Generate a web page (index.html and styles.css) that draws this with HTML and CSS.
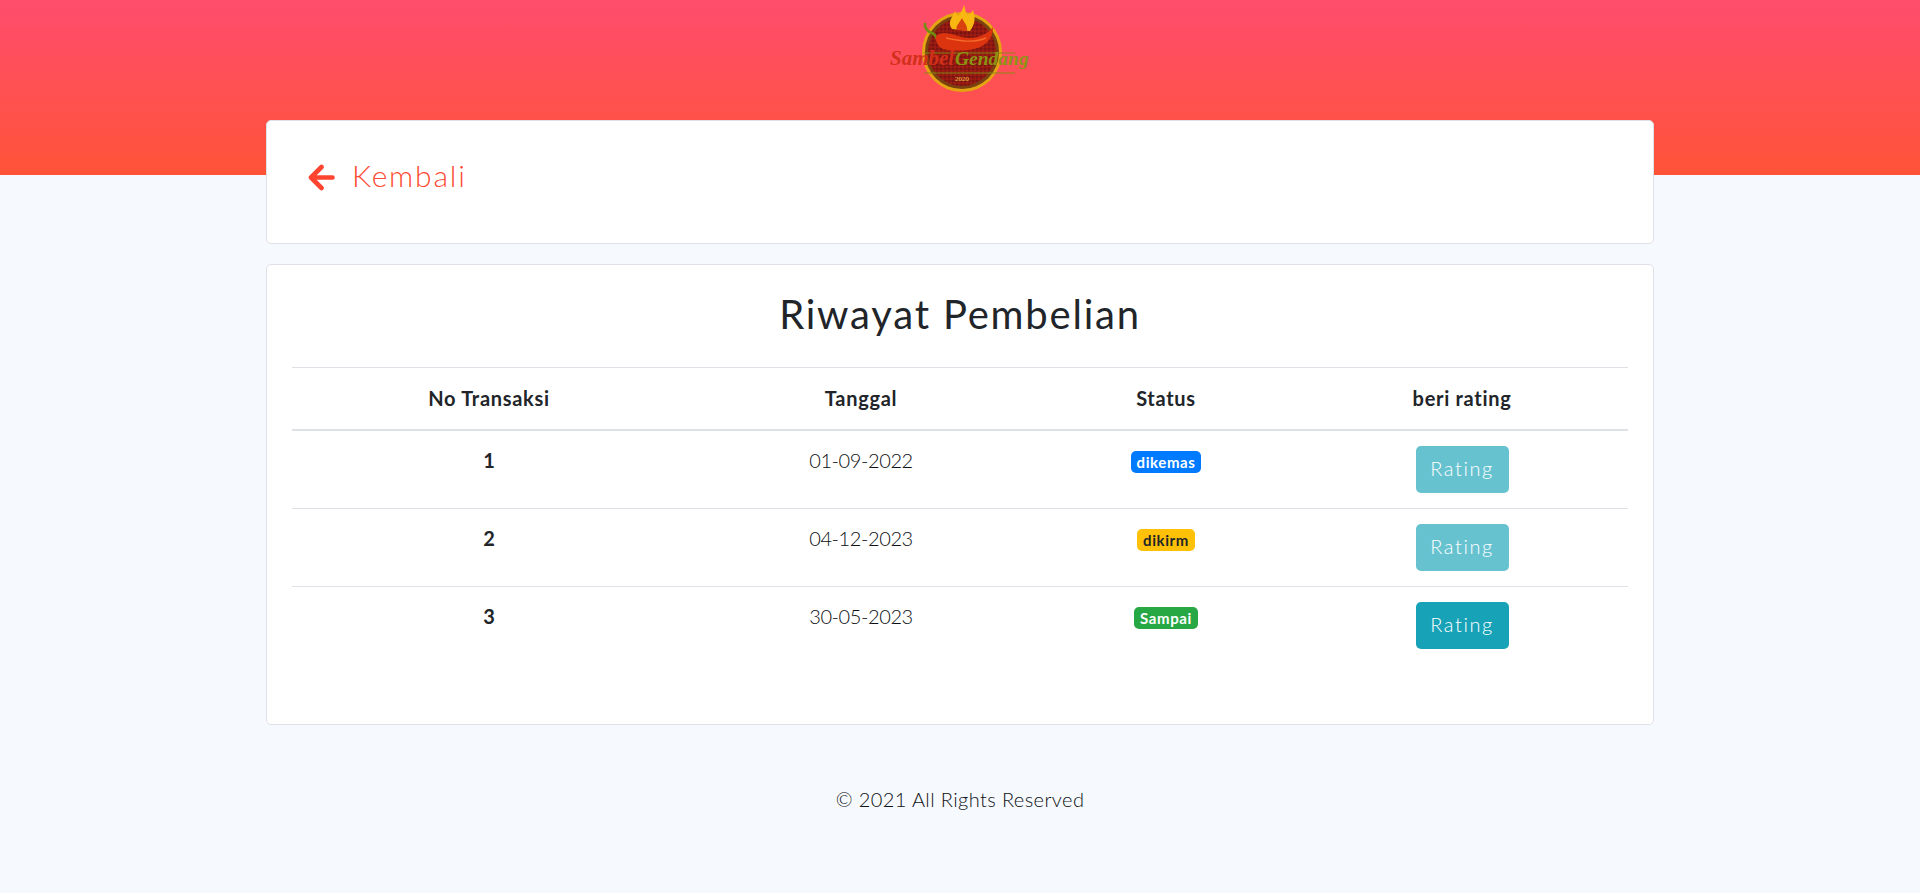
FILE: index.html
```html
<!DOCTYPE html>
<html lang="id">
<head>
<meta charset="utf-8">
<title>Riwayat Pembelian</title>
<link rel="stylesheet" href="styles.css">
</head>
<body>
<header class="hero">
  <svg class="logo" viewBox="0 0 160 96" width="160" height="96" role="img" aria-label="Sambel Gendang">
    <defs>
      <pattern id="speck" width="4" height="4" patternUnits="userSpaceOnUse">
        <rect width="4" height="4" fill="#8f1812"/>
        <circle cx="1" cy="1" r="0.8" fill="#5e0e0c"/>
        <circle cx="3" cy="3" r="0.7" fill="#b92414"/>
      </pattern>
    </defs>
    <circle cx="82" cy="52" r="40" fill="#e5a412"/>
    <circle cx="82" cy="52" r="37" fill="#7a4210"/>
    <circle cx="82" cy="52" r="34" fill="url(#speck)"/>
    <path d="M72 29C67 22 72 18 75 11C76 15 78 16 79 15C81 12 83 9 84 5C86 10 85 13 88 15C90 14 92 12 93 10C95 17 96 23 90 31Z" fill="#f9b712"/>
    <path d="M77 30C75 26 79 24 82 18C84 23 88 25 87 31Z" fill="#d9420f"/>
    <path d="M45 23C44 29 48 32 54 34L58 40" fill="none" stroke="#6f8e12" stroke-width="2.6"/>
    <path d="M56 36C62 30 72 34 82 37C94 40 106 36 113 27C113 38 107 46 94 49C84 51 71 51 63 49C58 47 55 41 56 36Z" fill="#dd3410"/>
    <path d="M66 38C76 40 92 44 106 38" fill="none" stroke="#f46a2a" stroke-width="1.4"/>
    <path d="M44 53H135M44 73H135" stroke="#8f8512" stroke-width="1"/>
    <text x="10" y="65" class="logo-red">Sambel</text>
    <text x="75" y="65" class="logo-green">Gendang</text>
    <text x="82" y="81" class="logo-year">2020</text>
  </svg>
</header>
<main class="page">
  <section class="card back-card">
    <a class="back" href="#">
      <svg class="arrow" viewBox="0 0 27 27" width="27" height="27"><path d="M24.500 13.500H3M13.500 3L3 13.500L13.500 24" fill="none" stroke="#ff4530" stroke-width="4.600" stroke-linecap="round" stroke-linejoin="round"/></svg>
      <span class="back-label">Kembali</span>
    </a>
  </section>
  <section class="card table-card">
    <h1>Riwayat Pembelian</h1>
    <table>
      <thead>
        <tr><th>No Transaksi</th><th>Tanggal</th><th>Status</th><th>beri rating</th></tr>
      </thead>
      <tbody>
        <tr><th>1</th><td class="date">01-09-2022</td><td><span class="badge blue">dikemas</span></td><td><a class="btn faded" href="#">Rating</a></td></tr>
        <tr><th>2</th><td class="date">04-12-2023</td><td><span class="badge yellow">dikirm</span></td><td><a class="btn faded" href="#">Rating</a></td></tr>
        <tr><th>3</th><td class="date">30-05-2023</td><td><span class="badge green">Sampai</span></td><td><a class="btn" href="#">Rating</a></td></tr>
      </tbody>
    </table>
  </section>
  <footer class="foot">© 2021 All Rights Reserved</footer>
</main>
</body>
</html>
```
FILE: styles.css
```css
* { box-sizing: border-box; }
html, body { margin: 0; height: 100%; }
body {
  background: #f6f9fe;
  color: #212529;
  font-family: "Lato", "Noto Sans", sans-serif;
  font-size: 20px;
  overflow: hidden;
}
.hero {
  height: 175px;
  background: linear-gradient(180deg, #ff4d6d 0%, #ff5338 100%);
  display: flex;
  justify-content: center;
}
.logo { display: block; }
.logo text { font-family: "Liberation Serif", serif; font-style: italic; font-weight: 700; }
.logo-red { font-size: 21px; fill: #d2301a; }
.logo-green { font-size: 19.5px; fill: #8b9412; }
.logo .logo-year { font-size: 7px; fill: #f2c94c; text-anchor: middle; font-style: normal; font-weight: 400; }
.page {
  width: 1388px;
  margin: -55px auto 0;
  position: relative;
}
.card {
  background: #fff;
  border: 1px solid #dfe1e8;
  border-radius: 5px;
}
.back-card { height: 124px; padding: 34px 41px; margin-bottom: 20px; }
.back {
  display: inline-flex;
  align-items: center;
  gap: 17px;
  color: #ff4b33;
  text-decoration: none;
  font-size: 30px;
  line-height: 40px;
  font-weight: 300;
  letter-spacing: 1.8px;
}
.back-label { padding-bottom: 4px; }
.table-card { height: 461px; padding: 25px 25px; }
h1 {
  margin: 0 0 29px;
  text-align: center;
  font-size: 40px;
  line-height: 48px;
  font-weight: 400;
  letter-spacing: 1.8px;
}
table { width: 100%; border-collapse: collapse; table-layout: fixed; }
thead th {
  height: 62px;
  border-top: 1px solid #dee2e6;
  border-bottom: 2px solid #dee2e6;
  font-weight: 700;
  font-size: 20px;
  letter-spacing: 0.7px;
}
th:nth-child(1) { width: 394px; }
th:nth-child(2) { width: 350px; }
th:nth-child(3) { width: 260px; }
tbody th, tbody td {
  height: 78px;
  padding: 15px 0;
  border-bottom: 1px solid #dee2e6;
  text-align: center;
  vertical-align: top;
  line-height: 28px;
  font-weight: 300;
}
tbody th { font-weight: 700; }
tbody td.date { color: #0d1013; letter-spacing: -0.4px; }
tbody tr:last-child th, tbody tr:last-child td { border-bottom: 0; }
.badge {
  display: inline-block;
  padding: 0 6px;
  border-radius: 5px;
  font-size: 15px;
  line-height: 22px;
  font-weight: 700;
  vertical-align: top;
  margin-top: 5px;
  letter-spacing: 0.6px;
}
.blue { background: #007bff; color: #fff; }
.yellow { background: #ffc107; color: #212529; }
.green { background: #28a745; color: #fff; }
.btn {
  display: inline-block;
  width: 93px;
  height: 47px;
  border-radius: 5px;
  background: #17a2b8;
  color: #fff;
  text-decoration: none;
  line-height: 45px;
  font-weight: 300;
  letter-spacing: 1.6px;
}
.faded { opacity: 0.65; }
.foot {
  text-align: center;
  margin-top: 59px;
  line-height: 30px;
  font-weight: 300;
  letter-spacing: 0.4px;
  color: #0d1013;
}
```
